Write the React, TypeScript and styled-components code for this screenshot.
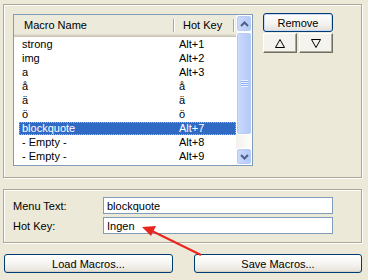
import * as React from 'react'
import styled, { createGlobalStyle, css } from 'styled-components'

const GlobalStyle = createGlobalStyle`
  body {
    margin: 0;
    background: #ece9d8;
    font-family: "Liberation Sans", Arial, sans-serif;
    font-size: 11px;
    color: #000;
  }
`

const macros = [
  { name: 'strong', key: 'Alt+1' },
  { name: 'img', key: 'Alt+2' },
  { name: 'a', key: 'Alt+3' },
  { name: 'å', key: 'å' },
  { name: 'ä', key: 'ä' },
  { name: 'ö', key: 'ö' },
  { name: 'blockquote', key: 'Alt+7' },
  { name: '- Empty -', key: 'Alt+8' },
  { name: '- Empty -', key: 'Alt+9' },
]

const Page = styled.div`
  position: relative;
  width: 368px;
  height: 280px;
  box-sizing: border-box;
  padding: 4px 0 0 3px;
  display: flex;
  flex-direction: column;
  overflow: hidden;
`

const Group = styled.div<{ $h: number; $top?: number }>`
  width: 359px;
  height: ${p => p.$h}px;
  margin-top: ${p => p.$top || 0}px;
  box-sizing: border-box;
  border: 1px solid #aca899;
  box-shadow: 1px 1px 0 #fff, inset 1px 1px 0 #fff;
`

const UpperBody = styled.div`
  display: flex;
  padding: 9px;
  gap: 10px;
`

const List = styled.div`
  width: 240px;
  height: 152px;
  box-sizing: border-box;
  border: 1px solid #7f9db9;
  background: #fff;
  display: flex;
`

const ListMain = styled.div`
  width: 222px;
  display: flex;
  flex-direction: column;
`

const Header = styled.div`
  height: 22px;
  box-sizing: border-box;
  display: flex;
  background: #ebeadb;
  box-shadow: inset 0 -1px 0 #cbc7b8, inset 0 -2px 0 #d6d2c2, inset 0 -3px 0 #e2decd;
`

const HeaderCell = styled.div<{ $w: number; $pad: number }>`
  position: relative;
  width: ${p => p.$w}px;
  padding-left: ${p => p.$pad}px;
  box-sizing: border-box;
  line-height: 21px;
  &::after {
    content: '';
    position: absolute;
    right: 0;
    top: 4px;
    bottom: 5px;
    width: 1px;
    background: #aca899;
    box-shadow: 1px 0 0 #fff;
  }
`

const Rows = styled.div`
  display: flex;
  flex-direction: column;
  gap: 1px;
  padding: 1px 0 0 5px;
`

const Row = styled.div<{ $sel?: boolean }>`
  height: 13px;
  display: flex;
  line-height: 13px;
  box-sizing: border-box;
  ${p =>
    p.$sel &&
    css`
      background: #316ac5;
      color: #fff;
      outline: 1px dotted #e8b04a;
      outline-offset: -1px;
    `}
`

const Cell = styled.div<{ $w?: number; $pad: number }>`
  width: ${p => (p.$w ? `${p.$w}px` : 'auto')};
  padding-left: ${p => p.$pad}px;
  box-sizing: border-box;
  white-space: nowrap;
`

const Scrollbar = styled.div`
  width: 16px;
  display: flex;
  flex-direction: column;
  background: linear-gradient(to right, #f3f1ec, #fefefb);
`

const blueFace = css`
  box-sizing: border-box;
  border: 1px solid #fff;
  border-radius: 3px;
  background: linear-gradient(to right, #cddbfc, #bccffa 60%, #b4c9f8);
  box-shadow: inset 0 0 0 1px #b8cbf5;
`

const ScrollBtn = styled.div`
  ${blueFace}
  height: 17px;
  display: flex;
  align-items: center;
  justify-content: center;
`

const Thumb = styled.div`
  ${blueFace}
  height: 103px;
  display: flex;
  align-items: center;
  justify-content: center;
`

const Grip = styled.div`
  width: 7px;
  height: 7px;
  background: repeating-linear-gradient(#eef4fe 0 1px, #8cb0f8 1px 2px);
`

const Track = styled.div`
  flex: 1;
`

const ButtonCol = styled.div`
  width: 70px;
  margin-top: -1px;
  display: flex;
  flex-direction: column;
  gap: 1px;
`

const XPButton = styled.button<{ $w: number; $h: number; $default?: boolean }>`
  width: ${p => p.$w}px;
  height: ${p => p.$h}px;
  padding: 0;
  font: inherit;
  color: #000;
  border: 1px solid #003c74;
  border-radius: 3px;
  background: linear-gradient(#ffffff, #f3f2ee 60%, #e3e0d6);
  box-shadow: ${p => (p.$default ? 'inset 0 0 0 1px #c9d8f8' : 'inset 0 -1px 0 #d8d2c6')};
`

const ArrowPair = styled.div`
  display: flex;
  gap: 2px;
`

const ClassicBtn = styled.div`
  width: 34px;
  height: 20px;
  box-sizing: border-box;
  border: 1px solid;
  border-color: #fff #716f64 #716f64 #fff;
  box-shadow: inset -1px -1px 0 #aca899;
  background: #f4f3ee;
  display: flex;
  align-items: center;
  justify-content: center;
`

const LowerBody = styled.div`
  padding: 7px 9px;
  display: flex;
  flex-direction: column;
  gap: 3px;
`

const FieldRow = styled.div`
  display: flex;
  align-items: center;
`

const Label = styled.div`
  width: 90px;
`

const TextBox = styled.input`
  width: 230px;
  height: 17px;
  box-sizing: border-box;
  border: 1px solid #7f9db9;
  padding: 0 3px;
  font: inherit;
  color: #000;
  background: #fff;
  outline: none;
`

const BottomBar = styled.div`
  margin-top: 11px;
  padding-left: 1px;
  display: flex;
  gap: 21px;
`

const Annotation = styled.svg`
  position: absolute;
  left: 0;
  top: 0;
  pointer-events: none;
`

const Chevron = ({ down }: { down?: boolean }) => (
  <svg width="9" height="6" viewBox="0 0 9 6">
    <polyline
      points={down ? '1,1 4.5,4.5 8,1' : '1,5 4.5,1.5 8,5'}
      fill="none"
      stroke="#4d6185"
      strokeWidth="2"
    />
  </svg>
)

const Tri = ({ down }: { down?: boolean }) => (
  <svg width="10" height="9" viewBox="0 0 10 9">
    <polygon
      points={down ? '0.5,0.5 9.5,0.5 5,8.5' : '5,0.5 9.5,8.5 0.5,8.5'}
      fill="none"
      stroke="#000"
      strokeWidth="1"
    />
  </svg>
)

const App = () => (
  <>
    <GlobalStyle />
    <Page>
      <Group $h={174}>
        <UpperBody>
          <List>
            <ListMain>
              <Header>
                <HeaderCell $w={160} $pad={10}>Macro Name</HeaderCell>
                <HeaderCell $w={60} $pad={9}>Hot Key</HeaderCell>
              </Header>
              <Rows>
                {macros.map((m, i) => (
                  <Row key={i} $sel={i === 6}>
                    <Cell $w={155} $pad={3}>{m.name}</Cell>
                    <Cell $pad={5}>{m.key}</Cell>
                  </Row>
                ))}
              </Rows>
            </ListMain>
            <Scrollbar>
              <ScrollBtn>
                <Chevron />
              </ScrollBtn>
              <Thumb>
                <Grip />
              </Thumb>
              <Track />
              <ScrollBtn>
                <Chevron down />
              </ScrollBtn>
            </Scrollbar>
          </List>
          <ButtonCol>
            <XPButton $w={70} $h={19} $default>Remove</XPButton>
            <ArrowPair>
              <ClassicBtn>
                <Tri />
              </ClassicBtn>
              <ClassicBtn>
                <Tri down />
              </ClassicBtn>
            </ArrowPair>
          </ButtonCol>
        </UpperBody>
      </Group>
      <Group $h={54} $top={11}>
        <LowerBody>
          <FieldRow>
            <Label>Menu Text:</Label>
            <TextBox readOnly value="blockquote" />
          </FieldRow>
          <FieldRow>
            <Label>Hot Key:</Label>
            <TextBox readOnly value="Ingen" />
          </FieldRow>
        </LowerBody>
      </Group>
      <BottomBar>
        <XPButton $w={169} $h={19}>Load Macros...</XPButton>
        <XPButton $w={168} $h={19}>Save Macros...</XPButton>
      </BottomBar>
      <Annotation width="368" height="280">
        <line x1="201" y1="255" x2="152" y2="231" stroke="#e8251e" strokeWidth="2" />
        <polygon points="142,227 156,226 151,236" fill="#e8251e" />
      </Annotation>
    </Page>
  </>
)

export default App
